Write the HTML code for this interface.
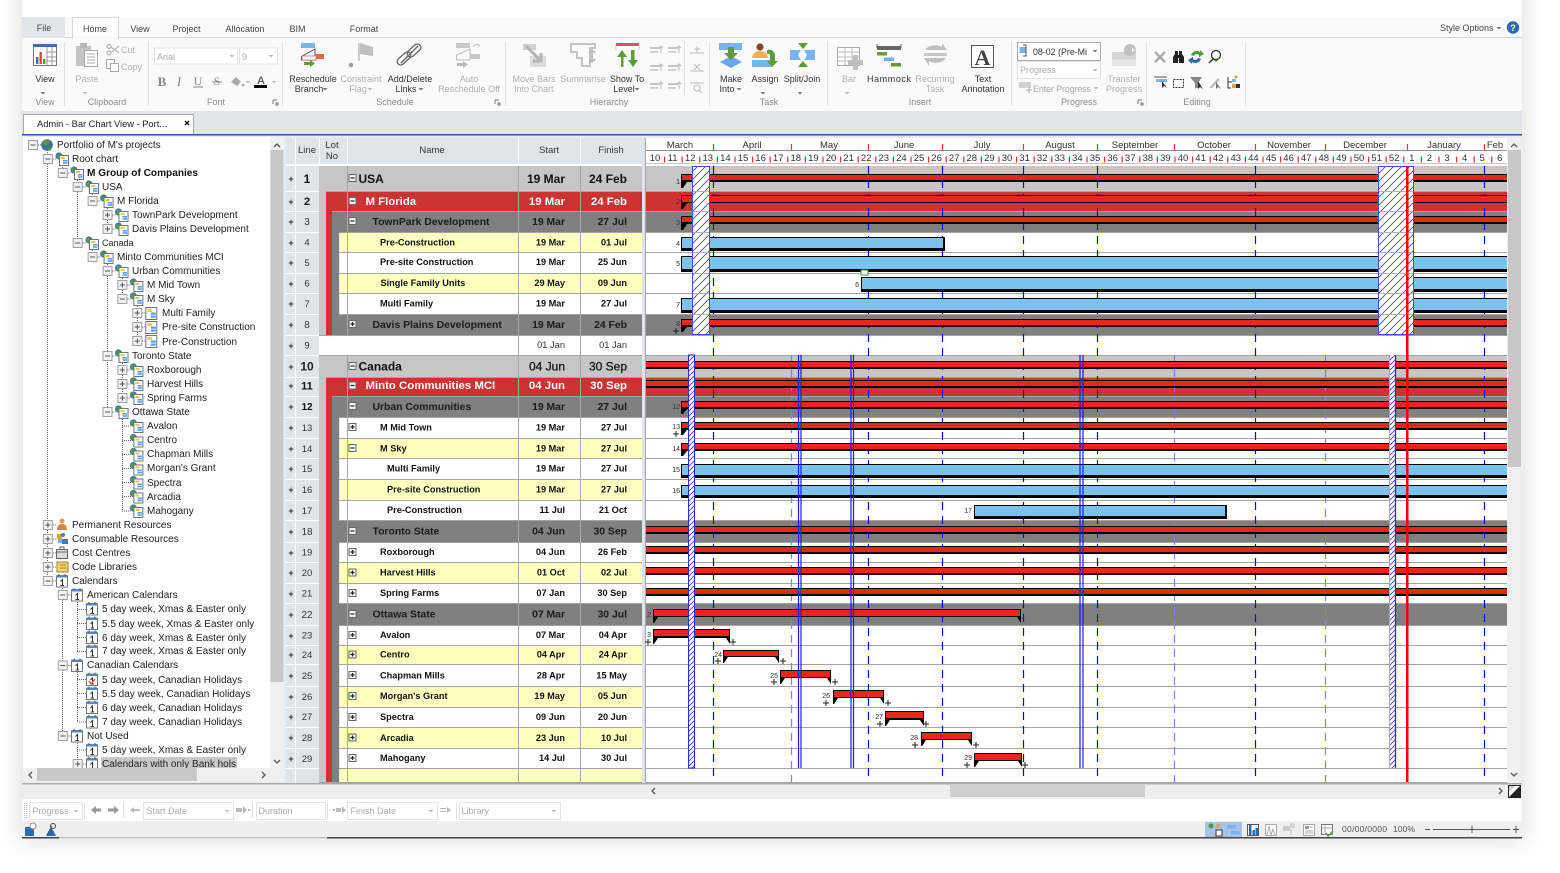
<!DOCTYPE html>
<html lang="en"><head><meta charset="utf-8"><title>Bar Chart View</title>
<style>
html,body{margin:0;padding:0;background:#fff;width:1560px;height:873px;overflow:hidden}
svg{display:block;filter:blur(.25px)}
text{font-family:"Liberation Sans",Arial,sans-serif;white-space:pre}
.r{font-size:9px;fill:#333;text-anchor:middle}
.g{font-size:9px;fill:#b0b0b0;text-anchor:middle}
.gl{font-size:9px;fill:#8a8a8a;text-anchor:middle}
.tab{font-size:9px;fill:#444;text-anchor:middle}
.tr{font-size:10px;fill:#222}
.hd{font-size:9.5px;fill:#333;text-anchor:middle}
.mo{font-size:9.5px;fill:#333;text-anchor:middle}
.wk{font-size:9.5px;fill:#333;text-anchor:middle}
.pl{font-size:9px;font-weight:bold;fill:#333;text-anchor:middle}
.ln{fill:#333;text-anchor:middle;font-size:9.5px}
.n0,.n1,.n2,.n3{font-weight:bold;fill:#111}
.n0{font-size:12px}.n1{font-size:11.4px;fill:#fff}.n2{font-size:10.4px;fill:#1a1a1a}.n3{font-size:9.2px;fill:#111}
.s{text-anchor:end}
.lb{font-size:7px;fill:#333;text-anchor:end}
.bt{font-size:9px;fill:#aaa}
</style></head><body>
<svg width="1560" height="873" viewBox="0 0 1560 873" xmlns="http://www.w3.org/2000/svg">
<defs>
<filter id="sh" x="-10%" y="-10%" width="120%" height="120%"><feGaussianBlur stdDeviation="11"/></filter>
<pattern id="ht" width="8" height="8" patternUnits="userSpaceOnUse"><rect width="8" height="8" fill="#fff"/><path d="M-1 9L9-1M-1 1L1-1M7 9L9 7" stroke="#3a3af0" stroke-width=".8" fill="none"/></pattern>
<pattern id="hn" width="5" height="5" patternUnits="userSpaceOnUse"><rect width="5" height="5" fill="#fff"/><path d="M-1 6L6-1M-1 1L1-1M4 6L6 4" stroke="#3a3af0" stroke-width=".8" fill="none"/></pattern>
<g id="em"><rect x="-4.5" y="-4.5" width="9" height="9" fill="#f0f1f3" stroke="#a0a0a0"/><path d="M-2.5 0H2.5" stroke="#555"/><path d="M5 0H9" stroke="#666" stroke-dasharray="1 1"/></g>
<g id="ep"><rect x="-4.5" y="-4.5" width="9" height="9" fill="#f0f1f3" stroke="#a0a0a0"/><path d="M-2.5 0H2.5M0-2.5V2.5" stroke="#555"/><path d="M5 0H9" stroke="#666" stroke-dasharray="1 1"/></g>
<g id="gm"><rect x="-3.5" y="-3.5" width="7" height="7" fill="#f4f4f4" stroke="#666"/><path d="M-2 0H2" stroke="#222" stroke-width="1.2"/></g>
<g id="gp"><rect x="-3.5" y="-3.5" width="7" height="7" fill="#f4f4f4" stroke="#666"/><path d="M-2 0H2M0-2V2" stroke="#222" stroke-width="1.2"/></g>
<g id="gc"><circle cx="-3" cy="-3" r="3.6" fill="#4c7f8c"/><path d="M-5-5l3 1-1 3-2-1z" fill="#5a9a50"/><rect x="-2.5" y="-3.5" width="9" height="10" fill="#fff" stroke="#6a7480"/><rect x="-1" y="-2" width="4" height="2" fill="#f5c842"/><rect x="1" y="1" width="4.5" height="1.6" fill="#5a9ef0"/><rect x="1" y="3.2" width="4.5" height="1.6" fill="#5a9ef0"/></g>
<g id="dc"><rect x="-5.5" y="-5.5" width="11" height="12" fill="#fff" stroke="#6a7480"/><rect x="-4" y="-4" width="4.5" height="3" fill="#f5c842"/><rect x="-.5" y="-.5" width="5" height="2.2" fill="#5a9ef0"/><rect x="-.5" y="2.5" width="5" height="2.2" fill="#5a9ef0"/></g>
<g id="cl"><rect x="-5.5" y="-5" width="11" height="11" fill="#fff" stroke="#777"/><rect x="-5.5" y="-6" width="11" height="2.500" fill="#5a86bc"/><path d="M-3-7v2M3-7v2" stroke="#555"/><path d="M-1.5 0.5L.5-1.5V4.5M-1.5 4.5H2" stroke="#333" fill="none"/></g>
<path id="tri" d="M-2.5 0h5l-2.5 2.5z" fill="#777"/>
<path id="gtri" d="M-2.5 0h5l-2.5 2.5z" fill="#bbb"/>
<path id="pk" d="M-3 0H3M0-3V3" stroke="#222" stroke-width="1" fill="none"/>
<g id="sq"><rect x="-6" y="-3" width="10" height="2" fill="#c4c4c4"/><rect x="-6" y="1" width="8" height="2" fill="#d0d0d0"/><path d="M5-4v7M3-2l2-2 2 2" stroke="#bbb" fill="none"/></g>
</defs>

<!-- window shadow -->
<rect x="20" y="-20" width="1504" height="860" fill="#000" opacity=".13" filter="url(#sh)"/>
<rect x="22" y="0" width="1500" height="17" fill="#fff"/>

<!-- ribbon -->
<rect x="22" y="17" width="1500" height="94" fill="#fafafa"/>
<rect x="22" y="37" width="1500" height="1" fill="#d4d4d4"/>
<rect x="22" y="17" width="43" height="21" fill="#e2e5e9"/>
<rect x="72.5" y="17.5" width="46" height="21" fill="#fff" stroke="#d8d8d8"/><rect x="73" y="36" width="45" height="3" fill="#fafafa"/>
<text class="tab" x="44" y="31">File</text><text class="tab" x="95" y="32" fill="#333">Home</text><text class="tab" x="140" y="32">View</text><text class="tab" x="186.5" y="32">Project</text><text class="tab" x="245" y="32">Allocation</text><text class="tab" x="297.5" y="32">BIM</text><text class="tab" x="364" y="32">Format</text>
<text x="1440" y="31" font-size="9" fill="#444">Style Options</text><use href="#tri" x="1499" y="27"/>
<circle cx="1513" cy="27.5" r="6.2" fill="#2a6cb4"/><text x="1513" y="31" font-size="9" font-weight="bold" fill="#fff" text-anchor="middle">?</text>

<path d="M64.5 42V106M148.5 42V106M282.5 42V106M505.5 42V106M684.5 42V95M709.5 42V106M827.5 42V106M1011.5 42V106M1146.5 42V106M1245.5 42V106" stroke="#e2e2e2"/>

<!-- View -->
<rect x="33.5" y="44.5" width="23" height="21" fill="#fff" stroke="#777"/><rect x="33" y="44" width="24" height="3" fill="#3f6fa8"/>
<path d="M47 47V65M52 47V65M47 52H56M47 57H56M47 61H56" stroke="#999"/><rect x="36" y="57" width="2.4" height="7" fill="#3f6fa8"/><rect x="39.5" y="52" width="2.4" height="12" fill="#c9513a"/><rect x="43" y="59" width="2.4" height="5" fill="#5b9a3c"/>
<text class="r" x="45" y="82">View</text><use href="#tri" x="43" y="92"/><text class="gl" x="45" y="105">View</text>
<!-- Clipboard -->
<rect x="76" y="46" width="15" height="20" fill="#c4c4c4"/><rect x="80" y="43" width="7" height="5" fill="#b4b4b4"/><rect x="84.5" y="50.5" width="13" height="16" fill="#fff" stroke="#aaa"/><path d="M87 54H95M87 57H95M87 60H95M87 63H95" stroke="#aaa"/>
<text class="g" x="87" y="82">Paste</text><use href="#gtri" x="85" y="92"/>
<circle cx="109" cy="46.5" r="2" fill="none" stroke="#aaa"/><circle cx="109" cy="53" r="2" fill="none" stroke="#aaa"/><path d="M111 47L119 53M111 52.5L119 46" stroke="#aaa" fill="none"/>
<text class="g" x="121" y="53" style="text-anchor:start">Cut</text>
<rect x="106.5" y="59.5" width="8" height="9" fill="#fff" stroke="#aaa"/><rect x="110.5" y="63.5" width="8" height="8" fill="#fff" stroke="#aaa"/>
<text class="g" x="121" y="70" style="text-anchor:start">Copy</text>
<text class="gl" x="107" y="105">Clipboard</text>
<!-- Font -->
<rect x="154.5" y="48" width="83" height="16" fill="#fff" stroke="#e4e4e4"/><rect x="239.5" y="48" width="38" height="16" fill="#fff" stroke="#e4e4e4"/>
<text class="bt" x="157" y="60">Arial</text><text class="bt" x="242" y="60">9</text><use href="#gtri" x="232" y="55"/><use href="#gtri" x="271" y="55"/>
<g fill="#888"><text x="162" y="86" style="font-family:'Liberation Serif'" font-size="13" font-weight="bold" text-anchor="middle">B</text><text x="179" y="86" style="font-family:'Liberation Serif'" font-size="13" font-style="italic" text-anchor="middle">I</text><text x="198" y="85" style="font-family:'Liberation Serif'" font-size="12" text-anchor="middle">U</text><text x="217" y="85" style="font-family:'Liberation Serif'" font-size="12" text-anchor="middle">S</text></g>
<path d="M193 87H203M212 82H222" stroke="#888"/>
<path d="M231 82l5-5 5 5-4 4z" fill="#aaa"/><circle cx="243" cy="85" r="1.4" fill="#aaa"/><use href="#gtri" x="248" y="81"/>
<text x="261" y="84" font-size="11" font-weight="bold" fill="#666" text-anchor="middle">A</text><rect x="254" y="85" width="13" height="3" fill="#000"/><use href="#gtri" x="274" y="81"/>
<text class="gl" x="216" y="105">Font</text><path d="M273 100h4M273 100v4M276 103h2v2h-2z" stroke="#777" fill="none"/>
<!-- Schedule -->
<rect x="301" y="43" width="14" height="5" fill="#7ab2f8"/><path d="M301.5 56.5L315 49V60H301.5z" fill="none" stroke="#555"/><rect x="315" y="54" width="9" height="5" fill="#e06a4c"/><rect x="302" y="56" width="14" height="4" fill="#fff" stroke="#d45" stroke-width=".6"/><path d="M304 62h6v-2l5 3.500-5 3.500v-2h-6z" fill="#5e9c3a"/>
<text class="r" x="313" y="82">Reschedule</text><text class="r" x="309" y="92">Branch</text><use href="#tri" x="325" y="88"/>
<path d="M359 43V61" stroke="#ccc" stroke-width="2"/><path d="M360 43L373 47V56L360 54z" fill="#c0c0c0"/><circle cx="351" cy="65" r="2.200" fill="#999"/>
<text class="g" x="361" y="82">Constraint</text><text class="g" x="358" y="92">Flag</text><use href="#gtri" x="370" y="88"/>
<g fill="none" stroke="#666" stroke-width="1.3"><rect x="396" y="55" width="16" height="7" rx="3.500" transform="rotate(-42 404 58.500)"/><rect x="406" y="47" width="16" height="7" rx="3.500" transform="rotate(-42 414 50.500)"/><path d="M401 63L418 46"/></g>
<text class="r" x="410" y="82">Add/Delete</text><text class="r" x="406" y="92">Links</text><use href="#tri" x="421" y="88"/>
<rect x="456" y="43" width="14" height="5" fill="#c8c8c8"/><path d="M456.500 55L470 49V60H456.500z" fill="none" stroke="#bbb"/><rect x="470" y="54" width="10" height="5" fill="#c8c8c8"/><path d="M473 47a4 4 0 0 1 7-1" stroke="#bbb" fill="none"/><path d="M457 63h6v-2l5 3.500-5 3.500v-2h-6z" fill="#bbb"/>
<text class="g" x="469" y="82">Auto</text><text class="g" x="469" y="92">Reschedule Off</text>
<text class="gl" x="395" y="105">Schedule</text><path d="M495 100h4M495 100v4M498 103h2v2h-2z" stroke="#777" fill="none"/>
<!-- Hierarchy -->
<rect x="523" y="44" width="13" height="6" fill="#d0d0d0"/><rect x="530" y="56" width="16" height="11" fill="#dcdcdc"/><path d="M526 46L541 61M541 53V61H533" stroke="#b4b4b4" stroke-width="3" fill="none"/>
<text class="g" x="534" y="82">Move Bars</text><text class="g" x="534" y="92">into Chart</text>
<path d="M571 44H595V48H590V66H582V58H577V52H571z" fill="none" stroke="#c4c4c4" stroke-width="2"/><path d="M592 50V62M589 53l3-3 3 3M589 59l3 3 3-3" stroke="#b8b8b8" fill="none" stroke-width="1.600"/>
<text class="g" x="583" y="82">Summarise</text>
<path d="M616 50V45H639V50" fill="#fff" stroke="#ccc"/><rect x="616" y="43" width="23" height="3" fill="#d85a3c"/><path d="M621 67V57H617L622 50L627 57H623.500V67z" fill="#5e9c3a"/><path d="M631 50V60H628L633 67L638 60H634.500V50z" fill="#5e9c3a"/>
<text class="r" x="627" y="82">Show To</text><text class="r" x="624" y="92">Level</text><use href="#tri" x="637" y="88"/>
<use href="#sq" x="656" y="50"/><use href="#sq" x="674" y="50"/><use href="#sq" x="656" y="68"/><use href="#sq" x="674" y="68"/><use href="#sq" x="656" y="86"/><use href="#sq" x="674" y="86"/>
<path d="M690 53H704M697 46V52M694 49H700" stroke="#bbb" fill="none"/><path d="M690 71H704M694 64L700 70M700 64L694 70" stroke="#bbb" fill="none"/><path d="M690 83L704 83" stroke="#bbb"/><circle cx="697" cy="88" r="3" fill="none" stroke="#bbb"/><path d="M699 90l3 3" stroke="#bbb"/>
<text class="gl" x="609" y="105">Hierarchy</text>
<!-- Task -->
<rect x="719" y="43" width="23" height="7" fill="#7ab2f8"/><path d="M731 56L742 62L731 68L720 62z" fill="#6aa8ee"/><path d="M728 47H734V53H738L731 60L724 53H728z" fill="#5e9c3a"/>
<text class="r" x="731" y="82">Make</text><text class="r" x="727" y="92">Into</text><use href="#tri" x="739" y="88"/>
<circle cx="760" cy="47" r="3.600" fill="#7a4a2a"/><path d="M752 58Q753 51 760 51Q767 51 768 58z" fill="#f0b050"/><rect x="752" y="59" width="20" height="8" fill="#7ab2f8"/><rect x="752" y="58" width="19" height="2" fill="#fff"/><path d="M767 50a6 6 0 0 1 8 6V61H778L772 67L767 61H770V56a2 2 0 0 0-3-2z" fill="#5e9c3a"/>
<text class="r" x="765" y="82">Assign</text><use href="#tri" x="763" y="92"/>
<path d="M798 43H808L803 49zM798 67H808L803 61z" fill="#5e9c3a"/><path d="M790 50H801L798 55L801 60H790z" fill="#7ab2f8"/><path d="M804 50H815V60H804L807 55z" fill="#7ab2f8"/>
<text class="r" x="802" y="82">Split/Join</text><use href="#tri" x="800" y="92"/>
<text class="gl" x="769" y="105">Task</text>
<!-- Insert -->
<rect x="837.500" y="47.500" width="22" height="18" fill="#fff" stroke="#aaa"/><path d="M838 52H859M838 57H859M838 61H859M845 47V65M852 47V65" stroke="#bbb"/><path d="M853 55H858V60H863V65H858V70H853V65H848V60H853z" fill="#c0c0c0"/>
<text class="g" x="849" y="82">Bar</text><use href="#gtri" x="847" y="92"/>
<rect x="877" y="46" width="24" height="4" fill="#666"/><path d="M877 44v4M901 44v4" stroke="#666"/><rect x="877" y="52" width="10" height="3.500" fill="#6a9a3c"/><rect x="884" y="57.500" width="10" height="3.500" fill="#7ab2f8"/><rect x="891" y="63" width="10" height="3.500" fill="#6a9a3c"/>
<text class="r" x="889" y="82" textLength="44">Hammock</text>
<path d="M925 50a11 8 0 0 1 17-3V43L947 50H930M946 58a11 8 0 0 1-17 3V66L924 58H941" fill="#c0c0c0"/><rect x="924" y="53" width="23" height="3" fill="#c8c8c8"/>
<text class="g" x="935" y="82">Recurring</text><text class="g" x="935" y="92">Task</text>
<rect x="971.500" y="45.500" width="22" height="22" fill="#fff" stroke="#555"/><text x="982.500" y="65" style="font-family:'Liberation Serif'" font-size="22" font-weight="bold" fill="#444" text-anchor="middle">A</text>
<text class="r" x="983" y="82">Text</text><text class="r" x="983" y="92">Annotation</text>
<text class="gl" x="920" y="105">Insert</text>
<!-- Progress -->
<rect x="1017.500" y="42.500" width="83" height="18" fill="#fff" stroke="#aaa"/><rect x="1019.500" y="47" width="7" height="6" fill="#7ab2f8"/><path d="M1023 45h3v11h-3" stroke="#555" fill="none"/>
<text x="1033" y="55" font-size="9" fill="#333" textLength="54" lengthAdjust="spacingAndGlyphs">08-02 (Pre-Mi</text><use href="#tri" x="1095" y="50"/>
<rect x="1017.500" y="61.500" width="83" height="17" fill="#fff" stroke="#e4e4e4"/><text class="bt" x="1020" y="73">Progress</text><use href="#gtri" x="1095" y="69"/>
<rect x="1019" y="82" width="12" height="6" fill="#d0d0d0"/><path d="M1026 90h6M1029 87v6" stroke="#aaa"/><text class="bt" x="1033" y="92" textLength="58">Enter Progress</text><use href="#gtri" x="1096" y="87"/>
<rect x="1112" y="52" width="24" height="7" fill="#d4d4d4"/><rect x="1112" y="59" width="24" height="7" fill="#e4e4e4"/><circle cx="1130" cy="50" r="6" fill="#c0c0c0"/><path d="M1126 50h6v-2.500l3 2.500-3 2.500V50" fill="#fff"/>
<text class="g" x="1124" y="82">Transfer</text><text class="g" x="1124" y="92">Progress</text>
<text class="gl" x="1079" y="105">Progress</text><path d="M1138 100h4M1138 100v4M1141 103h2v2h-2z" stroke="#777" fill="none"/>
<!-- Editing -->
<path d="M1155 52L1165 62M1165 52L1155 62" stroke="#aaa" stroke-width="2.600"/>
<path d="M1173 63V57L1175 54V51H1178V63zM1179 63V51H1182V54L1184 57V63z" fill="#222"/><rect x="1178" y="55" width="1" height="3" fill="#222"/>
<path d="M1191 55a6 6 0 0 1 9-3V50L1204 54 1199 57V55a3 3 0 0 0-5 1z" fill="#4d9a3c"/><path d="M1201 59a6 6 0 0 1-9 3V64L1188 60 1193 57V59a3 3 0 0 0 5-1z" fill="#2a6cb4"/>
<circle cx="1216" cy="55" r="4.500" fill="none" stroke="#333" stroke-width="1.300"/><path d="M1213 59L1209 63" stroke="#333" stroke-width="1.500"/><path d="M1218 60h-4l2 2z" fill="#4d9a3c"/>
<path d="M1154 77H1167" stroke="#555"/><rect x="1156" y="79" width="11" height="3" fill="#7ab2f8"/><path d="M1162 81l0 7 2-2 3 2z" fill="#333"/>
<rect x="1173.500" y="79.500" width="10" height="8" fill="none" stroke="#333" stroke-dasharray="2 1"/>
<path d="M1190 77H1202L1198 83V88H1195V83z" fill="#888"/><path d="M1198 81l0 8 2-2 3 2z" fill="#333"/>
<path d="M1209 88L1218 78L1220 80L1212 88z" fill="#bbb"/><path d="M1216 82l0 7 2-2 3 2z" fill="#777"/>
<path d="M1228 77v11h3M1228 82h4" stroke="#333" fill="none"/><rect x="1232" y="79" width="4" height="3" fill="#7ab2f8"/><rect x="1232" y="84" width="4" height="4" fill="#e0a040"/><rect x="1236" y="84" width="4" height="4" fill="#333"/><circle cx="1236" cy="77" r="1.500" fill="#e0a040"/>
<text class="gl" x="1197" y="105">Editing</text>

<!-- doc tab band -->
<rect x="22" y="111" width="1500" height="24" fill="#e1e4e8"/>
<rect x="23.500" y="114.500" width="170" height="20" fill="#fff" stroke="#a8a8a8"/>
<text x="37" y="127" font-size="9.300" fill="#222">Admin - Bar Chart View - Port...</text>
<path d="M185 121L189 125M189 121L185 125" stroke="#111" stroke-width="1.300"/>
<rect x="22" y="134" width="1500" height="1.500" fill="#2b5797"/>
<rect x="22" y="135.500" width="1500" height="665" fill="#e8ebef"/>

<!-- TREE -->
<rect x="23" y="137" width="247" height="631" fill="#fff"/>
<g>
<rect x="101" y="757" width="136" height="13" fill="#c8c8c8"/>
<path stroke="#666" stroke-dasharray="1 1" fill="none" d="M47.500 150V581M62.500 165V173M62.500 586V736M77.500 178V187M77.500 192V243M77.500 600V651M77.500 670V722M77.500 741V764M92.500 192V201M92.500 248V257M107.500 206V229M107.500 262V412M122.500 276V300M122.500 361V398M122.500 417V511M137.500 304V342M122 426H131M122 440.500H131M122 454.500H131M122 468.500H131M122 482.500H131M122 496.500H131M122 511H131M77 609.500H86M77 623.500H86M77 637.500H86M77 651.500H86M77 679.500H86M77 693.500H86M77 707.500H86M77 722H86M77 750H86"/>
<g>
<use href="#em" x="33" y="145"/><use href="#em" x="47.900" y="159"/><use href="#em" x="62.800" y="173"/><use href="#em" x="77.700" y="187"/><use href="#em" x="92.600" y="201"/><use href="#ep" x="107.500" y="215"/><use href="#ep" x="107.500" y="229"/><use href="#em" x="77.700" y="243"/><use href="#em" x="92.600" y="257"/><use href="#em" x="107.500" y="271"/><use href="#ep" x="122.400" y="285"/><use href="#em" x="122.400" y="299"/><use href="#ep" x="137.300" y="313"/><use href="#ep" x="137.300" y="327"/><use href="#ep" x="137.300" y="341"/><use href="#em" x="107.500" y="356"/><use href="#ep" x="122.400" y="370"/><use href="#ep" x="122.400" y="384"/><use href="#ep" x="122.400" y="398"/><use href="#em" x="107.500" y="412"/>
<use href="#ep" x="47.900" y="525"/><use href="#ep" x="47.900" y="539"/><use href="#ep" x="47.900" y="553"/><use href="#ep" x="47.900" y="567"/><use href="#em" x="47.900" y="581"/><use href="#em" x="62.800" y="595"/><use href="#em" x="62.800" y="665.500"/><use href="#em" x="62.800" y="736"/><use href="#ep" x="77.700" y="764"/>
</g>
<circle cx="47" cy="145" r="5.800" fill="#3a6ea5"/><path d="M43 141q4-3 7 0l-1 4-3 1-3-2zM47 149l3-2 2 1-2 3z" fill="#5c8f4c"/>
<use href="#gc" x="62" y="159"/><use href="#gc" x="77" y="173"/><use href="#gc" x="92" y="187"/><use href="#gc" x="106.600" y="201"/><use href="#gc" x="121.500" y="215"/><use href="#gc" x="121.500" y="229"/><use href="#gc" x="92" y="243"/><use href="#gc" x="106.600" y="257"/><use href="#gc" x="121.500" y="271"/><use href="#gc" x="136.400" y="285"/><use href="#gc" x="136.400" y="299"/><use href="#dc" x="151.300" y="313"/><use href="#dc" x="151.300" y="327"/><use href="#dc" x="151.300" y="341"/><use href="#gc" x="121.500" y="356"/><use href="#gc" x="136.400" y="370"/><use href="#gc" x="136.400" y="384"/><use href="#gc" x="136.400" y="398"/><use href="#gc" x="121.500" y="412"/><use href="#gc" x="136.400" y="426"/><use href="#gc" x="136.400" y="440.500"/><use href="#gc" x="136.400" y="454.500"/><use href="#gc" x="136.400" y="468.500"/><use href="#gc" x="136.400" y="482.500"/><use href="#gc" x="136.400" y="496.500"/><use href="#gc" x="136.400" y="511"/>
<circle cx="62" cy="521" r="2.500" fill="#e0a050"/><path d="M57 530q0-6 5-6t5 6z" fill="#d9883c"/>
<rect x="57" y="534" width="5" height="5" fill="#e0a040"/><rect x="62" y="539" width="6" height="5" fill="#4a7ab8"/><rect x="58" y="539" width="4" height="4" fill="#7ab2f8"/><circle cx="63" cy="535" r="2" fill="#4a7ab8"/>
<rect x="56.500" y="549.500" width="11" height="9" fill="#ddd" stroke="#666"/><path d="M56 552H68M60 550V547H64V550" stroke="#666" fill="none"/>
<path d="M57 562H68V572H57z" fill="#f3d06a" stroke="#a08030"/><path d="M60 565H66M60 568H66" stroke="#a08030"/>
<use href="#cl" x="62" y="581"/><use href="#cl" x="77" y="595"/><use href="#cl" x="92" y="609"/><use href="#cl" x="92" y="623.500"/><use href="#cl" x="92" y="637.500"/><use href="#cl" x="92" y="651.500"/><use href="#cl" x="77" y="665.500"/><use href="#cl" x="92" y="679.500"/><use href="#cl" x="92" y="693.500"/><use href="#cl" x="92" y="707.500"/><use href="#cl" x="92" y="722"/><use href="#cl" x="77" y="736"/><use href="#cl" x="92" y="750"/><use href="#cl" x="92" y="764"/>
<path d="M89 681l2 3 4-5" stroke="#e0603a" stroke-width="1.500" fill="none"/>
<g class="tr">
<text class="tr" x="57" y="148">Portfolio of M's projects</text>
<text class="tr" x="72" y="162">Root chart</text>
<text class="tr" x="87" y="176" font-weight="bold" style="font-size:10.100px;fill:#111">M Group of Companies</text>
<text class="tr" x="102" y="190">USA</text>
<text class="tr" x="117" y="204">M Florida</text>
<text class="tr" x="132" y="218">TownPark Development</text>
<text class="tr" x="132" y="232">Davis Plains Development</text>
<text class="tr" x="102" y="246" style="font-size:9px">Canada</text>
<text class="tr" x="117" y="260">Minto Communities MCI</text>
<text class="tr" x="132" y="274">Urban Communities</text>
<text class="tr" x="147" y="288">M Mid Town</text>
<text class="tr" x="147" y="302">M Sky</text>
<text class="tr" x="162" y="316">Multi Family</text>
<text class="tr" x="162" y="330">Pre-site Construction</text>
<text class="tr" x="162" y="345">Pre-Construction</text>
<text class="tr" x="132" y="359">Toronto State</text>
<text class="tr" x="147" y="373">Roxborough</text>
<text class="tr" x="147" y="387">Harvest Hills</text>
<text class="tr" x="147" y="401">Spring Farms</text>
<text class="tr" x="132" y="415">Ottawa State</text>
<text class="tr" x="147" y="429">Avalon</text>
<text class="tr" x="147" y="443">Centro</text>
<text class="tr" x="147" y="457">Chapman Mills</text>
<text class="tr" x="147" y="471">Morgan's Grant</text>
<text class="tr" x="147" y="486">Spectra</text>
<text class="tr" x="147" y="500">Arcadia</text>
<text class="tr" x="147" y="514">Mahogany</text>
<text class="tr" x="72" y="528">Permanent Resources</text>
<text class="tr" x="72" y="542">Consumable Resources</text>
<text class="tr" x="72" y="556">Cost Centres</text>
<text class="tr" x="72" y="570">Code Libraries</text>
<text class="tr" x="72" y="584">Calendars</text>
<text class="tr" x="87" y="598">American Calendars</text>
<text class="tr" x="102" y="612">5 day week, Xmas &amp; Easter only</text>
<text class="tr" x="102" y="627">5.5 day week, Xmas &amp; Easter only</text>
<text class="tr" x="102" y="641">6 day week, Xmas &amp; Easter only</text>
<text class="tr" x="102" y="654">7 day week, Xmas &amp; Easter only</text>
<text class="tr" x="87" y="668">Canadian Calendars</text>
<text class="tr" x="102" y="683">5 day week, Canadian Holidays</text>
<text class="tr" x="102" y="697">5.5 day week, Canadian Holidays</text>
<text class="tr" x="102" y="711">6 day week, Canadian Holidays</text>
<text class="tr" x="102" y="725">7 day week, Canadian Holidays</text>
<text class="tr" x="87" y="739">Not Used</text>
<text class="tr" x="102" y="753">5 day week, Xmas &amp; Easter only</text>
<text class="tr" x="102" y="767">Calendars with only Bank hols</text>
</g>
</g>
<!-- tree scrollbars -->
<rect x="270" y="137" width="14" height="631" fill="#f0f0f0"/><rect x="270.500" y="150" width="13" height="532" fill="#c8c8c8"/>
<path d="M274 147l3-3 3 3M274 760l3 3 3-3" stroke="#555" stroke-width="1.300" fill="none"/>
<rect x="23" y="768" width="261" height="14" fill="#f0f0f0"/><rect x="37" y="768" width="160" height="13" fill="#c8c8c8"/>
<path d="M32 772l-3 3 3 3M262 772l3 3-3 3" stroke="#555" stroke-width="1.300" fill="none"/>

<!-- GRID HEADER -->
<rect x="286" y="138" width="356" height="26" fill="#e1e4e8"/>
<path d="M295.500 138V164M319.500 138V164M347.500 138V164M518.500 138V164M580.500 138V164" stroke="#fff"/>
<text class="hd" x="307" y="153">Line</text><text class="hd" x="332" y="148">Lot</text><text class="hd" x="332" y="159">No</text><text class="hd" x="432" y="153">Name</text><text class="hd" x="549" y="153">Start</text><text class="hd" x="611" y="153">Finish</text>
<rect x="286" y="164" width="360" height="2" fill="#fff"/>
<!-- left columns -->
<rect x="286" y="166" width="33" height="617" fill="#e1e4e8"/>
<path d="M295.500 166V783" stroke="#fff"/>
<!-- gutter layers -->
<rect x="319" y="166" width="323" height="169" fill="#c6c6c6"/>
<rect x="326" y="191" width="316" height="144" fill="#cc3333"/>
<rect x="332" y="211" width="310" height="124" fill="#808080"/>
<rect x="319" y="335" width="323" height="20" fill="#fff"/>
<rect x="319" y="355" width="323" height="428" fill="#c6c6c6"/>
<rect x="326" y="377" width="316" height="406" fill="#cc3333"/>
<rect x="332" y="396" width="310" height="387" fill="#808080"/>
<!-- row fills -->
<g>
<rect x="339" y="232" width="303" height="20" fill="#ffffc0"/><rect x="339" y="252" width="303" height="21" fill="#fff"/><rect x="339" y="273" width="303" height="20" fill="#ffffc0"/><rect x="339" y="293" width="303" height="21" fill="#fff"/>
<rect x="339" y="417" width="303" height="21" fill="#fff"/><rect x="339" y="438" width="303" height="20" fill="#ffffc0"/><rect x="339" y="458" width="303" height="21" fill="#fff"/><rect x="339" y="479" width="303" height="21" fill="#ffffc0"/><rect x="339" y="500" width="303" height="20" fill="#fff"/>
<rect x="339" y="542" width="303" height="20" fill="#fff"/><rect x="339" y="562" width="303" height="21" fill="#ffffc0"/><rect x="339" y="583" width="303" height="20" fill="#fff"/>
<rect x="339" y="625" width="303" height="20" fill="#fff"/><rect x="339" y="645" width="303" height="19" fill="#ffffc0"/><rect x="339" y="664" width="303" height="22" fill="#fff"/><rect x="339" y="686" width="303" height="21" fill="#ffffc0"/><rect x="339" y="707" width="303" height="20" fill="#fff"/><rect x="339" y="727" width="303" height="21" fill="#ffffc0"/><rect x="339" y="748" width="303" height="20" fill="#fff"/><rect x="339" y="768" width="303" height="15" fill="#ffffc0"/>
<rect x="332" y="520" width="310" height="22" fill="#808080"/><rect x="332" y="603" width="310" height="22" fill="#808080"/><rect x="332" y="314" width="310" height="21" fill="#808080"/>
</g>
<path stroke="#e8e8e8" d="M339.500 232V314M339.500 417V520M339.500 542V603M339.500 625V783"/>
<!-- splitter + chart -->
<rect x="642" y="138" width="4" height="645" fill="#dfe3e8"/><path d="M645.500 138V783" stroke="#a8a8a8"/>
<rect x="646" y="138" width="861" height="645" fill="#fff"/>
<!-- chart row bgs -->
<rect x="646" y="166" width="861" height="25" fill="#c6c6c6"/><rect x="646" y="191" width="861" height="20" fill="#cc3333"/><rect x="646" y="211" width="861" height="21" fill="#808080"/><rect x="646" y="314" width="861" height="21" fill="#808080"/>
<rect x="646" y="355" width="861" height="22" fill="#c6c6c6"/><rect x="646" y="377" width="861" height="19" fill="#cc3333"/><rect x="646" y="396" width="861" height="21" fill="#808080"/><rect x="646" y="520" width="861" height="22" fill="#808080"/><rect x="646" y="603" width="861" height="22" fill="#808080"/>
<!-- row lines -->
<path stroke="#a4a4a4" fill="none" d="M339 232.500H642M646 232.500H1507M339 252.500H642M646 252.500H1507M339 273.500H642M646 273.500H1507M339 293.500H642M646 293.500H1507M339 314.500H642M646 314.500H1507M319 335.500H642M646 335.500H1507M319 355.500H642M646 355.500H1507M339 417.500H642M646 417.500H1507M339 438.500H642M646 438.500H1507M339 458.500H642M646 458.500H1507M339 479.500H642M646 479.500H1507M339 500.500H642M646 500.500H1507M339 520.500H642M646 520.500H1507M339 542.500H642M646 542.500H1507M339 562.500H642M646 562.500H1507M339 583.500H642M646 583.500H1507M339 603.500H642M646 603.500H1507M339 625.500H642M646 625.500H1507M339 645.500H642M646 645.500H1507M339 664.500H642M646 664.500H1507M339 686.500H642M646 686.500H1507M339 707.500H642M646 707.500H1507M339 727.500H642M646 727.500H1507M339 748.500H642M646 748.500H1507M339 768.500H642M646 768.500H1507M319 782.500H642M646 782.500H1507M326 191.500H642M646 191.500H1507M332 211.500H642M646 211.500H1507M326 377.500H642M646 377.500H1507M332 396.500H642M646 396.500H1507"/>
<path stroke="#fff" d="M286 191.500H319M286 211.500H319M286 232.500H319M286 252.500H319M286 273.500H319M286 293.500H319M286 314.500H319M286 335.500H319M286 355.500H319M286 377.500H319M286 396.500H319M286 417.500H319M286 438.500H319M286 458.500H319M286 479.500H319M286 500.500H319M286 520.500H319M286 542.500H319M286 562.500H319M286 583.500H319M286 603.500H319M286 625.500H319M286 645.500H319M286 664.500H319M286 686.500H319M286 707.500H319M286 727.500H319M286 748.500H319M286 768.500H319"/>
<path stroke="#a8a8a8" d="M347.500 166V335M347.500 355V783M518.500 166V783M580.500 166V783"/>

<!-- grid plus col -->
<g>
<text class="pl" x="291" y="182">+</text><text class="pl" x="291" y="205">+</text><text class="pl" x="291" y="225">+</text><text class="pl" x="291" y="246">+</text><text class="pl" x="291" y="266">+</text><text class="pl" x="291" y="287">+</text><text class="pl" x="291" y="307">+</text><text class="pl" x="291" y="328">+</text><text class="pl" x="291" y="349">+</text><text class="pl" x="291" y="370">+</text><text class="pl" x="291" y="389">+</text><text class="pl" x="291" y="410">+</text><text class="pl" x="291" y="431">+</text><text class="pl" x="291" y="452">+</text><text class="pl" x="291" y="472">+</text><text class="pl" x="291" y="493">+</text><text class="pl" x="291" y="514">+</text><text class="pl" x="291" y="535">+</text><text class="pl" x="291" y="556">+</text><text class="pl" x="291" y="576">+</text><text class="pl" x="291" y="597">+</text><text class="pl" x="291" y="618">+</text><text class="pl" x="291" y="639">+</text><text class="pl" x="291" y="658">+</text><text class="pl" x="291" y="679">+</text><text class="pl" x="291" y="700">+</text><text class="pl" x="291" y="720">+</text><text class="pl" x="291" y="741">+</text><text class="pl" x="291" y="762">+</text>
</g>
<!-- line numbers -->
<g>
<text class="ln" x="307" y="183" style="font-size:12px;font-weight:bold;fill:#111">1</text>
<text class="ln" x="307" y="205" style="font-size:11px;font-weight:bold;fill:#111">2</text>
<text class="ln" x="307" y="225" style="font-size:10px">3</text><text class="ln" x="307" y="245.500">4</text><text class="ln" x="307" y="266">5</text><text class="ln" x="307" y="286.500">6</text><text class="ln" x="307" y="307">7</text><text class="ln" x="307" y="328" style="font-size:10px">8</text><text class="ln" x="307" y="348.500">9</text>
<text class="ln" x="307" y="370.500" style="font-size:12px;font-weight:bold;fill:#222">10</text>
<text class="ln" x="307" y="389.500" style="font-size:11px;font-weight:bold;fill:#111">11</text>
<text class="ln" x="307" y="410" style="font-size:10px;font-weight:bold;fill:#111">12</text>
<text class="ln" x="307" y="431">13</text><text class="ln" x="307" y="452">14</text><text class="ln" x="307" y="472">15</text><text class="ln" x="307" y="493">16</text><text class="ln" x="307" y="514">17</text><text class="ln" x="307" y="535" style="font-size:10px">18</text><text class="ln" x="307" y="555.500">19</text><text class="ln" x="307" y="576">20</text><text class="ln" x="307" y="596.500">21</text><text class="ln" x="307" y="618" style="font-size:10px">22</text><text class="ln" x="307" y="638.500">23</text><text class="ln" x="307" y="658">24</text><text class="ln" x="307" y="679">25</text><text class="ln" x="307" y="700">26</text><text class="ln" x="307" y="720">27</text><text class="ln" x="307" y="741">28</text><text class="ln" x="307" y="762">29</text>
</g>
<!-- expanders -->
<use href="#gm" x="352.500" y="178"/><use href="#gm" x="352.500" y="201"/><use href="#gm" x="352.500" y="221"/><use href="#gp" x="352.500" y="324"/><use href="#gm" x="352.500" y="366"/><use href="#gm" x="352.500" y="385.500"/><use href="#gm" x="352.500" y="406"/><use href="#gp" x="352.500" y="427"/><use href="#gm" x="352.500" y="448"/><use href="#gm" x="352.500" y="531"/><use href="#gp" x="352.500" y="552"/><use href="#gp" x="352.500" y="572.500"/><use href="#gp" x="352.500" y="593"/><use href="#gm" x="352.500" y="614"/><use href="#gp" x="352.500" y="635"/><use href="#gp" x="352.500" y="654.500"/><use href="#gp" x="352.500" y="675"/><use href="#gp" x="352.500" y="696"/><use href="#gp" x="352.500" y="717"/><use href="#gp" x="352.500" y="737.500"/><use href="#gp" x="352.500" y="758"/>
<!-- names and dates -->
<g>
<text class="n0" x="358.500" y="183">USA</text><text class="n0 s" x="565" y="183">19 Mar</text><text class="n0 s" x="627" y="183">24 Feb</text>
<text class="n1" x="365.500" y="205">M Florida</text><text class="n1 s" x="565" y="205">19 Mar</text><text class="n1 s" x="627" y="205">24 Feb</text>
<text class="n2" x="372.500" y="225">TownPark Development</text><text class="n2 s" x="565" y="225">19 Mar</text><text class="n2 s" x="627" y="225">27 Jul</text>
<text class="n3" x="380" y="245.500">Pre-Construction</text><text class="n3 s" x="565" y="245.500">19 Mar</text><text class="n3 s" x="627" y="245.500">01 Jul</text>
<text class="n3" x="380" y="265">Pre-site Construction</text><text class="n3 s" x="565" y="265">19 Mar</text><text class="n3 s" x="627" y="265">25 Jun</text>
<text class="n3" x="380.500" y="286">Single Family Units</text><text class="n3 s" x="565" y="286">29 May</text><text class="n3 s" x="627" y="286">09 Jun</text>
<text class="n3" x="380" y="306.500">Multi Family</text><text class="n3 s" x="565" y="306.500">19 Mar</text><text class="n3 s" x="627" y="306.500">27 Jul</text>
<text class="n2" x="372.500" y="328">Davis Plains Development</text><text class="n2 s" x="565" y="328">19 Mar</text><text class="n2 s" x="627" y="328">24 Feb</text>
<text class="s" x="565" y="348" font-size="9.300" fill="#333">01 Jan</text><text class="s" x="627" y="348" font-size="9.300" fill="#333">01 Jan</text>
<text class="n0" x="358.500" y="370.500">Canada</text><text class="n0 s" x="565" y="370.500" style="font-weight:normal;stroke:#111;stroke-width:.25">04 Jun</text><text class="n0 s" x="627" y="370.500" style="font-weight:normal;stroke:#111;stroke-width:.25">30 Sep</text>
<text class="n1" x="365.500" y="389">Minto Communities MCI</text><text class="n1 s" x="565" y="389">04 Jun</text><text class="n1 s" x="627" y="389">30 Sep</text>
<text class="n2" x="372.500" y="410">Urban Communities</text><text class="n2 s" x="565" y="410">19 Mar</text><text class="n2 s" x="627" y="410">27 Jul</text>
<text class="n3" x="380" y="430.500">M Mid Town</text><text class="n3 s" x="565" y="430.500">19 Mar</text><text class="n3 s" x="627" y="430.500">27 Jul</text>
<text class="n3" x="380" y="451.500">M Sky</text><text class="n3 s" x="565" y="451.500">19 Mar</text><text class="n3 s" x="627" y="451.500">27 Jul</text>
<text class="n3" x="387" y="471.500">Multi Family</text><text class="n3 s" x="565" y="471.500">19 Mar</text><text class="n3 s" x="627" y="471.500">27 Jul</text>
<text class="n3" x="387" y="492.500">Pre-site Construction</text><text class="n3 s" x="565" y="492.500">19 Mar</text><text class="n3 s" x="627" y="492.500">27 Jul</text>
<text class="n3" x="387" y="513">Pre-Construction</text><text class="n3 s" x="565" y="513">11 Jul</text><text class="n3 s" x="627" y="513">21 Oct</text>
<text class="n2" x="372.500" y="534.500">Toronto State</text><text class="n2 s" x="565" y="534.500">04 Jun</text><text class="n2 s" x="627" y="534.500">30 Sep</text>
<text class="n3" x="380" y="555">Roxborough</text><text class="n3 s" x="565" y="555">04 Jun</text><text class="n3 s" x="627" y="555">26 Feb</text>
<text class="n3" x="380" y="575.500">Harvest Hills</text><text class="n3 s" x="565" y="575.500">01 Oct</text><text class="n3 s" x="627" y="575.500">02 Jul</text>
<text class="n3" x="380" y="596">Spring Farms</text><text class="n3 s" x="565" y="596">07 Jan</text><text class="n3 s" x="627" y="596">30 Sep</text>
<text class="n2" x="372.500" y="617.500">Ottawa State</text><text class="n2 s" x="565" y="617.500">07 Mar</text><text class="n2 s" x="627" y="617.500">30 Jul</text>
<text class="n3" x="380" y="638">Avalon</text><text class="n3 s" x="565" y="638">07 Mar</text><text class="n3 s" x="627" y="638">04 Apr</text>
<text class="n3" x="380" y="657.500">Centro</text><text class="n3 s" x="565" y="657.500">04 Apr</text><text class="n3 s" x="627" y="657.500">24 Apr</text>
<text class="n3" x="380" y="678.500">Chapman Mills</text><text class="n3 s" x="565" y="678.500">28 Apr</text><text class="n3 s" x="627" y="678.500">15 May</text>
<text class="n3" x="380" y="699">Morgan's Grant</text><text class="n3 s" x="565" y="699">19 May</text><text class="n3 s" x="627" y="699">05 Jun</text>
<text class="n3" x="380" y="720">Spectra</text><text class="n3 s" x="565" y="720">09 Jun</text><text class="n3 s" x="627" y="720">20 Jun</text>
<text class="n3" x="380" y="741">Arcadia</text><text class="n3 s" x="565" y="741">23 Jun</text><text class="n3 s" x="627" y="741">10 Jul</text>
<text class="n3" x="380" y="761">Mahogany</text><text class="n3 s" x="565" y="761">14 Jul</text><text class="n3 s" x="627" y="761">30 Jul</text>
</g>

<!-- CHART HEADER -->
<rect x="646" y="138" width="861" height="28" fill="#fff"/>
<path d="M646 150.500H1507" stroke="#909090"/><path d="M646 163.500H1507" stroke="#c8c8c8"/>
<g>
<text class="mo" x="680" y="148">March</text><text class="mo" x="752" y="148">April</text><text class="mo" x="829" y="148">May</text><text class="mo" x="904" y="148">June</text><text class="mo" x="982" y="148">July</text><text class="mo" x="1060" y="148">August</text><text class="mo" x="1135" y="148">September</text><text class="mo" x="1214" y="148">October</text><text class="mo" x="1289" y="148">November</text><text class="mo" x="1365" y="148">December</text><text class="mo" x="1444" y="148">January</text><text class="mo" x="1495" y="148">Feb</text>
</g>
<path stroke="#f03030" stroke-width="1.200" d="M713.500 144V150M791.500 144V150M868.500 144V150M942.500 144V150M1023.500 144V150M1097.500 144V150M1174.500 144V150M1255.500 144V150M1325.500 144V150M1407.500 144V150M1484.500 144V150"/>
<line x1="664" y1="159.500" x2="1507" y2="159.500" stroke="#f03030" stroke-width="6" stroke-dasharray="1.200 16.400"/>
<g>
<text class="wk" x="655" y="161">10</text><text class="wk" x="672.600" y="161">11</text><text class="wk" x="690.200" y="161">12</text><text class="wk" x="707.800" y="161">13</text><text class="wk" x="725.400" y="161">14</text><text class="wk" x="743" y="161">15</text><text class="wk" x="760.600" y="161">16</text><text class="wk" x="778.200" y="161">17</text><text class="wk" x="795.800" y="161">18</text><text class="wk" x="813.400" y="161">19</text><text class="wk" x="831" y="161">20</text><text class="wk" x="848.600" y="161">21</text><text class="wk" x="866.200" y="161">22</text><text class="wk" x="883.800" y="161">23</text><text class="wk" x="901.400" y="161">24</text><text class="wk" x="919" y="161">25</text><text class="wk" x="936.600" y="161">26</text><text class="wk" x="954.200" y="161">27</text><text class="wk" x="971.800" y="161">28</text><text class="wk" x="989.400" y="161">29</text><text class="wk" x="1007" y="161">30</text><text class="wk" x="1024.600" y="161">31</text><text class="wk" x="1042.200" y="161">32</text><text class="wk" x="1059.800" y="161">33</text><text class="wk" x="1077.400" y="161">34</text><text class="wk" x="1095" y="161">35</text><text class="wk" x="1112.600" y="161">36</text><text class="wk" x="1130.200" y="161">37</text><text class="wk" x="1147.800" y="161">38</text><text class="wk" x="1165.400" y="161">39</text><text class="wk" x="1183" y="161">40</text><text class="wk" x="1200.600" y="161">41</text><text class="wk" x="1218.200" y="161">42</text><text class="wk" x="1235.800" y="161">43</text><text class="wk" x="1253.400" y="161">44</text><text class="wk" x="1271" y="161">45</text><text class="wk" x="1288.600" y="161">46</text><text class="wk" x="1306.200" y="161">47</text><text class="wk" x="1323.800" y="161">48</text><text class="wk" x="1341.400" y="161">49</text><text class="wk" x="1359" y="161">50</text><text class="wk" x="1376.600" y="161">51</text><text class="wk" x="1394.200" y="161">52</text><text class="wk" x="1411.800" y="161">1</text><text class="wk" x="1429.400" y="161">2</text><text class="wk" x="1447" y="161">3</text><text class="wk" x="1464.600" y="161">4</text><text class="wk" x="1482.200" y="161">5</text><text class="wk" x="1499.800" y="161">6</text>
</g>

<!-- dashed month lines -->
<path stroke="#0000e6" stroke-width="1.200" stroke-dasharray="8 6" fill="none" d="M713.500 166V782M868.500 166V782M942.500 166V782M1023.500 166V782M1097.500 166V782M1255.500 166V782M1484.500 166V782"/>
<path stroke="#8080ff" stroke-width="1.200" stroke-dasharray="8 6" fill="none" d="M791.500 355V782M1174.500 355V782M1325.500 355V782"/>

<!-- full width summary bars -->
<g>
<rect x="681" y="174" width="826" height="8" fill="#000"/><rect x="681" y="175" width="826" height="5" fill="#e8261a"/>
<rect x="681" y="195" width="826" height="8" fill="#000"/><rect x="681" y="196" width="826" height="6" fill="#e8261a"/>
<rect x="681" y="216" width="826" height="8" fill="#000"/><rect x="681" y="217" width="826" height="5" fill="#e8261a"/>
<rect x="681" y="319" width="826" height="8" fill="#000"/><rect x="681" y="320" width="826" height="5" fill="#e8261a"/>
<rect x="646" y="361" width="861" height="8" fill="#000"/><rect x="646" y="362" width="861" height="5" fill="#e8261a"/>
<rect x="646" y="380" width="861" height="8" fill="#000"/><rect x="646" y="381" width="861" height="5" fill="#e8261a"/>
<rect x="681" y="401" width="826" height="8" fill="#000"/><rect x="681" y="402" width="826" height="5" fill="#e8261a"/>
<rect x="681" y="422" width="826" height="8" fill="#000"/><rect x="681" y="423" width="826" height="5" fill="#e8261a"/>
<rect x="681" y="443" width="826" height="8" fill="#000"/><rect x="681" y="444" width="826" height="5" fill="#e8261a"/>
<rect x="646" y="526" width="861" height="8" fill="#000"/><rect x="646" y="527" width="861" height="5" fill="#e8261a"/>
<rect x="646" y="546" width="861" height="8" fill="#000"/><rect x="646" y="547" width="861" height="5" fill="#e8261a"/>
<rect x="646" y="567" width="861" height="8" fill="#000"/><rect x="646" y="568" width="861" height="5" fill="#e8261a"/>
<rect x="646" y="588" width="861" height="8" fill="#000"/><rect x="646" y="589" width="861" height="5" fill="#e8261a"/>
</g>
<!-- left legs -->
<g fill="#000">
<path d="M681 174H690V182H687L683 188H681z"/><path d="M681 195H690V203H687L683 209H681z"/><path d="M681 216H690V224H687L683 230H681z"/><path d="M681 319H690V327H687L683 332H681z"/><path d="M681 401H690V409H687L683 414H681z"/><path d="M681 422H690V430H687L683 435H681z"/><path d="M681 443H690V451H687L683 456H681z"/>
</g>
<g fill="#e8261a"><rect x="682" y="175" width="8" height="5"/><rect x="682" y="196" width="8" height="6"/><rect x="682" y="217" width="8" height="5"/><rect x="682" y="320" width="8" height="5"/><rect x="682" y="402" width="8" height="5"/><rect x="682" y="423" width="8" height="5"/><rect x="682" y="444" width="8" height="5"/></g>

<!-- blue bars -->
<g>
<rect x="681" y="237" width="264" height="14" fill="#000"/><rect x="682" y="238" width="261" height="10" fill="#7ac3ee"/>
<rect x="681" y="256" width="826" height="16" fill="#000"/><rect x="682" y="257" width="825" height="12" fill="#7ac3ee"/>
<rect x="861" y="277" width="646" height="15" fill="#000"/><rect x="862" y="278" width="645" height="11" fill="#7ac3ee"/>
<rect x="681" y="298" width="826" height="15" fill="#000"/><rect x="682" y="299" width="825" height="11" fill="#7ac3ee"/>
<rect x="681" y="464" width="826" height="14" fill="#000"/><rect x="682" y="465" width="825" height="10" fill="#7ac3ee"/>
<rect x="681" y="485" width="826" height="13" fill="#000"/><rect x="682" y="486" width="825" height="9" fill="#7ac3ee"/>
<rect x="974" y="505" width="253" height="14" fill="#000"/><rect x="975" y="506" width="250" height="10" fill="#7ac3ee"/>
<rect x="861" y="270" width="7" height="5" fill="#fff" stroke="#3a9a3a"/>
</g>

<!-- staircase summaries -->
<g fill="#000">
<path d="M653 609H1021V623L1017 617H658L654 623H653z"/>
<path d="M653 629H730V644L726 638H658L654 644H653z"/>
<path d="M723 650H779V663L775 657H728L724 663H723z"/>
<path d="M780 670H831V684L827 678H785L781 684H780z"/>
<path d="M833 690H884V704L880 698H838L834 704H833z"/>
<path d="M885 711H924V726L920 720H890L886 726H885z"/>
<path d="M921 732H972V746L968 740H926L922 746H921z"/>
<path d="M974 753H1022V767L1018 761H979L975 767H974z"/>
</g>
<g fill="#e8261a"><rect x="654" y="610" width="366" height="6"/><rect x="654" y="630" width="75" height="6"/><rect x="724" y="651" width="54" height="5"/><rect x="781" y="671" width="49" height="6"/><rect x="834" y="691" width="49" height="6"/><rect x="886" y="712" width="37" height="6"/><rect x="922" y="733" width="49" height="6"/><rect x="975" y="754" width="46" height="6"/></g>

<!-- hatched non-working stripes -->
<g>
<rect x="692.500" y="166.500" width="17" height="168" fill="url(#ht)" stroke="#4a4af0"/>
<rect x="1378.500" y="166.500" width="35" height="168" fill="url(#ht)" stroke="#4a4af0"/>
<path stroke="#b4b4c8" d="M693 191.500H709M693 211.500H709M693 232.500H709M693 252.500H709M693 273.500H709M693 293.500H709M693 314.500H709M1379 191.500H1413M1379 211.500H1413M1379 232.500H1413M1379 252.500H1413M1379 273.500H1413M1379 293.500H1413M1379 314.500H1413"/>
<rect x="688.500" y="355" width="6" height="413" fill="url(#hn)" stroke="#2a2ae8"/>
<rect x="1390" y="355" width="5.500" height="413" fill="url(#hn)"/><path d="M1389.500 355V768" stroke="#aab"/><path d="M1395.500 355V768" stroke="#2a2ae8" stroke-width="1.300"/>
<g stroke="#1a1af0" stroke-width="1.200"><path d="M798.500 355V768M801 355V768M851 355V768M853.500 355V768M1080 355V768M1083 355V768"/></g>
<rect x="1406" y="166" width="2.500" height="616" fill="#f00000"/>
</g>

<!-- small labels -->
<g>
<text class="lb" x="680" y="184">1</text><text class="lb" x="680" y="204">2</text><text class="lb" x="680" y="225">3</text><text class="lb" x="680" y="246">4</text><text class="lb" x="680" y="266">5</text><text class="lb" x="859" y="287">6</text><text class="lb" x="680" y="307">7</text><text class="lb" x="680" y="326">8</text>
<text class="lb" x="680" y="409">12</text><text class="lb" x="680" y="429">13</text><text class="lb" x="680" y="451">14</text><text class="lb" x="680" y="472">15</text><text class="lb" x="680" y="493">16</text><text class="lb" x="972" y="513">17</text>
<text class="lb" x="651" y="617">2</text><text class="lb" x="651" y="637">3</text><text class="lb" x="722" y="657">24</text><text class="lb" x="778" y="678">25</text><text class="lb" x="830" y="698">26</text><text class="lb" x="883" y="719">27</text><text class="lb" x="918" y="740">28</text><text class="lb" x="972" y="760">29</text>
</g>
<g>
<use href="#pk" x="676" y="331"/><use href="#pk" x="676" y="434"/><use href="#pk" x="648" y="642"/><use href="#pk" x="733" y="642"/><use href="#pk" x="718" y="661"/><use href="#pk" x="783" y="661"/><use href="#pk" x="774" y="682"/><use href="#pk" x="835" y="682"/><use href="#pk" x="826" y="703"/><use href="#pk" x="888" y="703"/><use href="#pk" x="880" y="724"/><use href="#pk" x="926" y="724"/><use href="#pk" x="915" y="745"/><use href="#pk" x="976" y="745"/><use href="#pk" x="967" y="765"/><use href="#pk" x="1025" y="765"/>
</g>

<!-- chart scrollbar -->
<rect x="1507" y="138" width="15" height="645" fill="#f0f0f0"/><rect x="1508" y="150" width="13" height="317" fill="#c8c8c8"/>
<path d="M1511 147l3-3 3 3M1511 773l3 3 3-3" stroke="#555" stroke-width="1.300" fill="none"/>
<!-- bottom scrollbar -->
<rect x="22" y="783" width="1500" height="1.500" fill="#aaa"/>
<rect x="22" y="784.500" width="1500" height="14" fill="#efefef"/>
<rect x="950" y="785" width="195" height="12" fill="#cfcfcf"/>
<path d="M655 788l-3 3 3 3M1499 788l3 3-3 3" stroke="#555" stroke-width="1.300" fill="none"/>
<rect x="1508.500" y="785.500" width="12" height="12" fill="#fff" stroke="#222"/><path d="M1509 797L1520 786V797z" fill="#222"/><path d="M1509 786H1515L1509 792z" fill="#ccc"/>
<!-- bottom toolbar -->
<rect x="22" y="799" width="1500" height="22" fill="#fff"/>
<path d="M24.500 803V819" stroke="#bbb" stroke-dasharray="1 1"/><path d="M26.500 803V819" stroke="#bbb" stroke-dasharray="1 1"/>
<g fill="#fff" stroke="#e4e4e4"><rect x="29.500" y="802.500" width="53" height="17"/><rect x="143.500" y="802.500" width="90" height="17"/><rect x="256.500" y="802.500" width="69" height="17"/><rect x="347.500" y="802.500" width="90" height="17"/><rect x="459.500" y="802.500" width="101" height="17"/></g>
<path d="M84.500 803V819M123.500 803V819M252.500 803V819M327.500 803V819M456.500 803V819" stroke="#e0e0e0"/>
<text class="bt" x="32.500" y="814">Progress</text><use href="#gtri" x="76" y="810"/><text class="bt" x="146.500" y="814">Start Date</text><use href="#gtri" x="227" y="810"/><text class="bt" x="258.500" y="814">Duration</text><text class="bt" x="350.500" y="814">Finish Date</text><use href="#gtri" x="431" y="810"/><text class="bt" x="461.500" y="814">Library</text><use href="#gtri" x="554" y="810"/>
<path d="M91 810L96 806V808.500H101V811.500H96V814z" fill="#999"/><path d="M119 810L114 806V808.500H108V811.500H114V814z" fill="#999"/>
<path d="M130 810L134 807V809H140V811H134V813z" fill="#bbb"/><path d="M236 808h6v4h-6zM243 806l4 4-4 4zM248 809h2v2h-2z" fill="#bbb"/><path d="M333 809h2v2h-2zM336 808h5v4h-5zM342 806l4 4-4 4z" fill="#bbb"/><path d="M440 808h6v1h-6zM440 811h6v1h-6zM447 807l4 3-4 3z" fill="#bbb"/>
<!-- status bar -->
<rect x="22" y="821" width="1500" height="16" fill="#efefef"/>
<rect x="22" y="837" width="37" height="1.500" fill="#444"/><rect x="59" y="837" width="268" height="1.200" fill="#bbb"/><rect x="327" y="837" width="1195" height="1.500" fill="#444"/>
<rect x="25" y="827" width="9" height="9" fill="#2a6cb4"/><circle cx="33" cy="826" r="3" fill="#fff" stroke="#888"/>
<circle cx="53" cy="826" r="2.500" fill="none" stroke="#444"/><path d="M46 836L51 828L53 830L56 836z" fill="#2a6cb4"/><path d="M47 835L52 826" stroke="#444"/>
<rect x="1205" y="822" width="37" height="15" fill="#a8c4e4"/><circle cx="1211" cy="826" r="2.500" fill="#5c8f4c"/><rect x="1216" y="830" width="6" height="6" fill="#fff" stroke="#333"/><circle cx="1218" cy="826" r="2" fill="#e0a050"/><rect x="1227" y="825" width="9" height="3.500" fill="#7ab2f8"/><rect x="1231" y="831" width="9" height="3.500" fill="#7ab2f8"/>
<rect x="1247.500" y="824.500" width="11" height="11" fill="#fff" stroke="#555"/><path d="M1249 825h2.500v10H1249zM1252.500 830h2.500v5h-2.500zM1255.500 828h2.500v7h-2.500z" fill="#2a6cb4"/>
<rect x="1265.500" y="824.500" width="11" height="11" fill="#fff" stroke="#aaa"/><path d="M1267 835L1269 826L1271 835L1273 829L1275 835" stroke="#aaa" fill="none"/>
<rect x="1283" y="826" width="7" height="5" fill="#ccc"/><path d="M1291 824h3v3h-3zM1291 829v6" stroke="#bbb" fill="none"/>
<rect x="1303.500" y="824.500" width="11" height="11" fill="#fff" stroke="#aaa"/><rect x="1305" y="826" width="4" height="3" fill="#999"/><path d="M1310 827h3M1305 831h8M1305 833h8" stroke="#aaa"/>
<rect x="1321.500" y="824.500" width="11" height="10" fill="#fff" stroke="#777"/><path d="M1322 828H1332M1325 825V835" stroke="#aaa"/><path d="M1326 833l2 3 5-5" stroke="#5e9c3a" stroke-width="1.500" fill="none"/>
<text x="1342" y="832" font-size="8.600" fill="#555" textLength="45">00/00/0000</text><text x="1393" y="832" font-size="8.600" fill="#555">100%</text>
<path d="M1425 829.500H1430M1433 829.500H1510M1472 825.500V833M1513 829.500H1519M1516 826V833" stroke="#555" fill="none"/>
</svg>
</body></html>
